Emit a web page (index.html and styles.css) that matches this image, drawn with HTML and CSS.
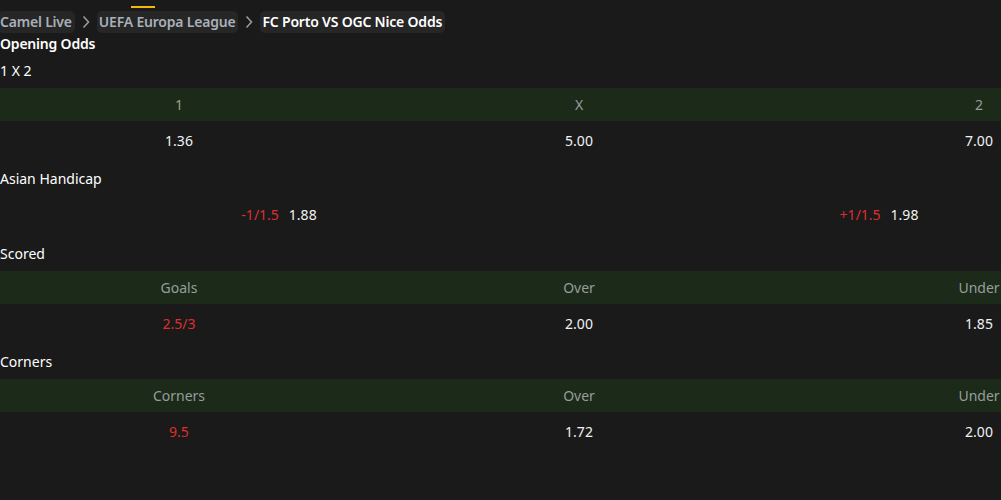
FILE: index.html
```html
<!DOCTYPE html>
<html lang="en">
<head>
<meta charset="utf-8">
<title>FC Porto VS OGC Nice Odds</title>
<link rel="stylesheet" href="styles.css">
</head>
<body>
<div class="page">
  <div class="nav-indicator"></div>
  <nav class="crumbs">
    <span class="crumb">Camel Live</span>
    <svg class="chev" width="8" height="14" viewBox="0 0 8 14"><path d="M1.5 1.5 L6.5 7 L1.5 12.5" fill="none" stroke="#9a9a9a" stroke-width="1.6"/></svg>
    <span class="crumb">UEFA Europa League</span>
    <svg class="chev" width="8" height="14" viewBox="0 0 8 14"><path d="M1.5 1.5 L6.5 7 L1.5 12.5" fill="none" stroke="#9a9a9a" stroke-width="1.6"/></svg>
    <span class="crumb current">FC Porto VS OGC Nice Odds</span>
  </nav>
  <h1 class="page-title">Opening Odds</h1>

  <section class="market">
    <h2 class="market-title">1 X 2</h2>
    <div class="grid head cols3"><span class="h-one">1</span><span>X</span><span>2</span></div>
    <div class="grid vals cols3"><span>1.36</span><span>5.00</span><span>7.00</span></div>
  </section>

  <section class="market">
    <h2 class="market-title">Asian Handicap</h2>
    <div class="grid hcap cols2">
      <span><em class="line">-1/1.5</em><span class="odd">1.88</span></span>
      <span><em class="line">+1/1.5</em><span class="odd">1.98</span></span>
    </div>
  </section>

  <section class="market">
    <h2 class="market-title">Scored</h2>
    <div class="grid head cols3"><span>Goals</span><span>Over</span><span>Under</span></div>
    <div class="grid vals cols3"><span class="red">2.5/3</span><span>2.00</span><span>1.85</span></div>
  </section>

  <section class="market">
    <h2 class="market-title">Corners</h2>
    <div class="grid head cols3"><span>Corners</span><span>Over</span><span>Under</span></div>
    <div class="grid vals cols3"><span class="red">9.5</span><span>1.72</span><span>2.00</span></div>
  </section>
</div>
</body>
</html>
```

FILE: styles.css
```css
html, body {
  margin: 0;
  padding: 0;
  background: #1a1a1a;
  overflow: hidden;
}
body {
  font-family: "Noto Sans", "Open Sans", sans-serif;
  font-size: 14px;
  color: #f0f0f0;
}
.page {
  width: 1001px;
  overflow: hidden;
}
.nav-indicator {
  width: 24px;
  height: 2px;
  margin: 6px 0 0 131px;
  background: #f5b80a;
}
.crumbs {
  display: flex;
  align-items: center;
  gap: 7px;
  margin: 3px 0 0 -2px;
  height: 22px;
}
.crumb {
  background: #262626;
  border-radius: 5px;
  padding: 0 3px 0 2px;
  height: 22px;
  line-height: 22px;
  font-weight: 600;
  letter-spacing: -0.2px;
  color: #a9b0ba;
}
.crumb.current {
  color: #ffffff;
}
.chev {
  display: block;
}
.page-title {
  margin: 0;
  font-size: 14px;
  font-weight: 600;
  line-height: 21px;
  letter-spacing: -0.2px;
  color: #ffffff;
}
.market-title {
  margin: 0;
  font-size: 14px;
  font-weight: 400;
  line-height: 34px;
  color: #ffffff;
}
.grid {
  display: grid;
  width: 1200px;
  margin-left: -21px;
  text-align: center;
}
.cols3 { grid-template-columns: repeat(3, 1fr); }
.cols2 { grid-template-columns: repeat(2, 1fr); }
.head {
  background: #1b2a19;
  height: 33px;
  line-height: 33px;
  color: #979e9a;
}
.h-one { color: #a3a37a; }
.vals {
  height: 41px;
  line-height: 40px;
  color: #f2f2f2;
}
.hcap {
  height: 41px;
  line-height: 38px;
  color: #f2f2f2;
}
.line {
  font-style: normal;
  color: #df2e2e;
  margin-right: 10px;
}
.red { color: #df2e2e; }
```
